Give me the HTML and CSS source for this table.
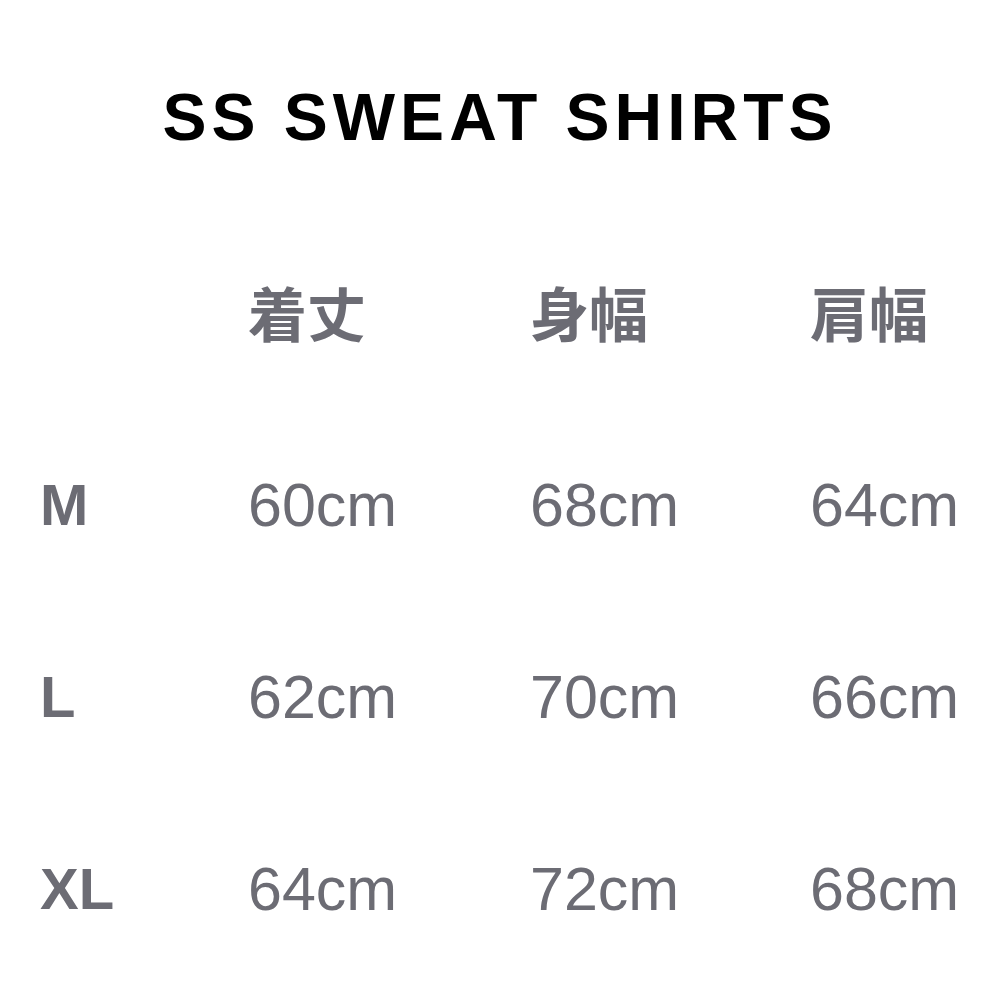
FILE: index.html
```html
<!DOCTYPE html>
<html lang="ja">
<head>
<meta charset="utf-8">
<link rel="stylesheet" href="styles.css">
</head>
<body>
<div class="page">
  <h1 class="title">SS SWEAT SHIRTS</h1>
  <div class="table">
    <div class="cell"></div>
    <div class="cell head">着丈</div>
    <div class="cell head">身幅</div>
    <div class="cell head">肩幅</div>

    <div class="cell size">M</div>
    <div class="cell val">60cm</div>
    <div class="cell val">68cm</div>
    <div class="cell val">64cm</div>

    <div class="cell size">L</div>
    <div class="cell val">62cm</div>
    <div class="cell val">70cm</div>
    <div class="cell val">66cm</div>

    <div class="cell size">XL</div>
    <div class="cell val">64cm</div>
    <div class="cell val">72cm</div>
    <div class="cell val">68cm</div>
  </div>
</div>
</body>
</html>
```

FILE: styles.css
```css
html, body {
  margin: 0;
  padding: 0;
  background: #ffffff;
}
.page {
  width: 1000px;
  height: 1000px;
  font-family: "Liberation Sans", Arial, "Noto Sans CJK JP", sans-serif;
  box-sizing: border-box;
  padding-top: 78px;
}
.title {
  margin: 0;
  text-align: center;
  font-size: 66px;
  font-weight: 700;
  line-height: 78px;
  letter-spacing: 5px;
  color: #000000;
}
.table {
  display: grid;
  grid-template-columns: 208px 282px 280px 1fr;
  grid-auto-rows: 192px;
  padding-left: 40px;
  margin-top: 61px;
  color: #6c6c74;
}
.cell {
  display: flex;
  align-items: center;
  font-size: 60px;
  line-height: 1;
}
.head {
  font-family: "Noto Sans CJK JP", sans-serif;
  font-weight: 700;
  font-size: 59px;
  margin-top: -4px;
}
.size {
  font-weight: 700;
  font-size: 58px;
}
.val {
  font-weight: 400;
  font-size: 61px;
}
```
